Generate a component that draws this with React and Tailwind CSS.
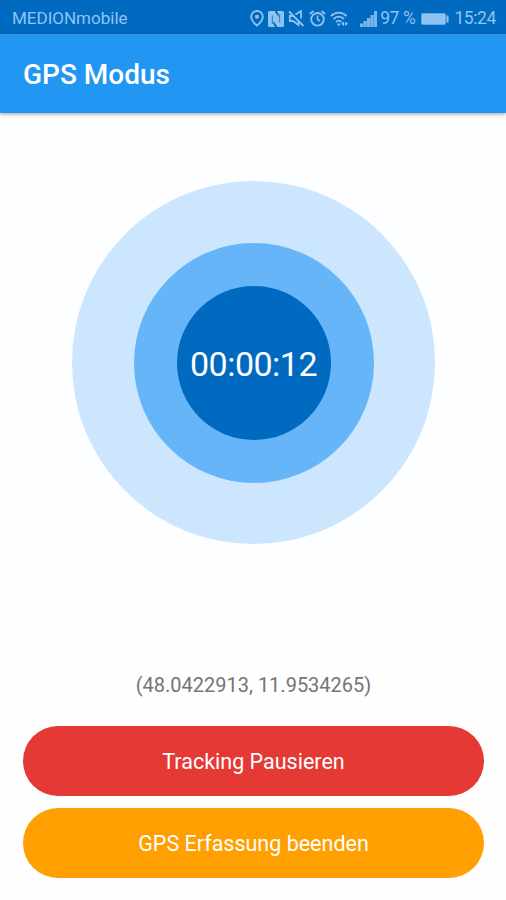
import React from 'react';

const PinIcon = () => (
  <svg className="h-[17px] w-[14px]" viewBox="0 0 14 17" fill="none" stroke="currentColor" strokeWidth="1.8">
    <path d="M7 1C3.700 1 1.200 3.500 1.200 6.700C1.200 10.500 7 15.700 7 15.700S12.800 10.500 12.800 6.700C12.800 3.500 10.300 1 7 1Z" />
    <circle cx="7" cy="6.700" r="2" fill="currentColor" stroke="none" />
  </svg>
);

const NfcIcon = () => (
  <svg className="h-4 w-4" viewBox="0 0 16 16">
    <path d="M1.500 0H6.500L10.500 6V3L9 0H14.500Q16 0 16 1.500V14.500Q16 16 14.500 16H9.500L5.500 10V13L7 16H1.500Q0 16 0 14.500V1.500Q0 0 1.500 0Z" fill="currentColor" />
    <path d="M4.300 4.500V13M11.700 3V11.500" stroke="#0069c0" strokeWidth=".8" />
  </svg>
);

const MuteIcon = () => (
  <svg className="h-[17px] w-[17px]" viewBox="0 0 17 17" fill="none" stroke="currentColor" strokeWidth="1.8">
    <path d="M1 1.500L15.500 16" />
    <path d="M5 6H1.800V11H5L10.500 15V11" />
    <path d="M7.500 4.500L13 1V8.500" />
  </svg>
);

const AlarmIcon = () => (
  <svg className="h-[17px] w-[17px]" viewBox="0 0 17 17" fill="none" stroke="currentColor" strokeWidth="1.8">
    <circle cx="8.500" cy="9.300" r="6.300" />
    <path d="M8.500 5.500V9.500L11 11" strokeWidth="1.500" />
    <path d="M.800 4L4.500 1M16.200 4L12.500 1" />
  </svg>
);

const WifiIcon = () => (
  <svg className="h-[17px] w-[18px]" viewBox="0 0 18 17" fill="none" stroke="currentColor" strokeWidth="1.800">
    <path d="M1 6C5.500 1.500 12 1.500 16.500 6" />
    <path d="M3.500 9C6.700 5.900 11 5.900 14 9" />
    <path d="M6 12C7.800 10.300 9.800 10.300 11.500 12" />
    <circle cx="8.700" cy="14.500" r="1.300" fill="currentColor" stroke="none" />
    <path d="M11 13.800L14 11.500V16Z M18 13.800L15 11.500V16Z" fill="currentColor" stroke="none" />
  </svg>
);

const SignalIcon = () => (
  <svg className="h-4 w-[17px]" viewBox="0 0 17 16" fill="currentColor" opacity=".85">
    <path d="M0 12.500H3.200V16H0ZM3.500 10H6.700V16H3.500ZM7 7H10.200V16H7ZM10.500 4H13.700V16H10.500ZM14 0H17V16H14Z" />
  </svg>
);

const BatteryIcon = () => (
  <svg className="h-3 w-[28px]" viewBox="0 0 28 12">
    <rect x=".500" y=".500" width="24" height="11" rx="1" fill="none" stroke="currentColor" opacity=".7" />
    <rect x="1" y="1" width="23" height="10" fill="currentColor" />
    <rect x="25.500" y="2.500" width="2" height="7" fill="currentColor" />
  </svg>
);

const StatusBar = () => (
  <div className="flex h-[34px] items-center justify-between bg-[#0069c0] pt-[3px] pr-[10px] pl-3 text-[#8fc4f2]">
    <span className="text-[17px] leading-none">MEDIONmobile</span>
    <div className="flex items-center">
      <div className="flex items-center gap-1">
        <PinIcon />
        <NfcIcon />
        <MuteIcon />
        <AlarmIcon />
        <WifiIcon />
      </div>
      <div className="ml-3 flex items-center text-[17.5px] leading-none tracking-[-0.4px]">
        <SignalIcon />
        <span className="ml-[3px]">97 %</span>
        <span className="mr-[5px] ml-1.5"><BatteryIcon /></span>
        <span>15:24</span>
      </div>
    </div>
  </div>
);

const Timer = ({ time }) => (
  <div className="flex size-[432px] items-center justify-center rounded-full bg-[#fdfeff]">
    <div className="flex size-[363px] items-center justify-center rounded-full bg-[#cce6fd]">
      <div className="flex size-[240px] items-center justify-center rounded-full bg-[#66b5f9]">
        <div className="flex size-[154px] items-center justify-center rounded-full bg-[#0069c0]">
          <span className="pt-[3px] text-[34px] leading-none tracking-[-0.5px] text-white">{time}</span>
        </div>
      </div>
    </div>
  </div>
);

export default function App() {
  return (
    <div className="flex h-[900px] w-[506px] flex-col overflow-hidden bg-[#fefefe] font-['Roboto',sans-serif]">
      <StatusBar />
      <header className="flex h-[79px] shrink-0 items-center bg-[#2196f3] pl-[23px] shadow-[0_1px_4px_rgba(0,0,0,0.4)]">
        <h1 className="pt-[3px] text-[28px] leading-none font-medium text-white">GPS Modus</h1>
      </header>
      <main className="flex flex-1 flex-col items-center pt-[33.5px] pr-[22px] pb-[22.5px] pl-[23px]">
        <Timer time="00:00:12" />
        <p className="mt-auto text-[20px] leading-6 text-[#757575]">(48.0422913, 11.9534265)</p>
        <div className="mt-[29px] flex w-full flex-col gap-3 text-[21.5px] text-white">
          <button className="h-[70px] rounded-full bg-[#e53935] pt-1">Tracking Pausieren</button>
          <button className="h-[70px] rounded-full bg-[#ffa000] pt-1">GPS Erfassung beenden</button>
        </div>
      </main>
    </div>
  );
}
